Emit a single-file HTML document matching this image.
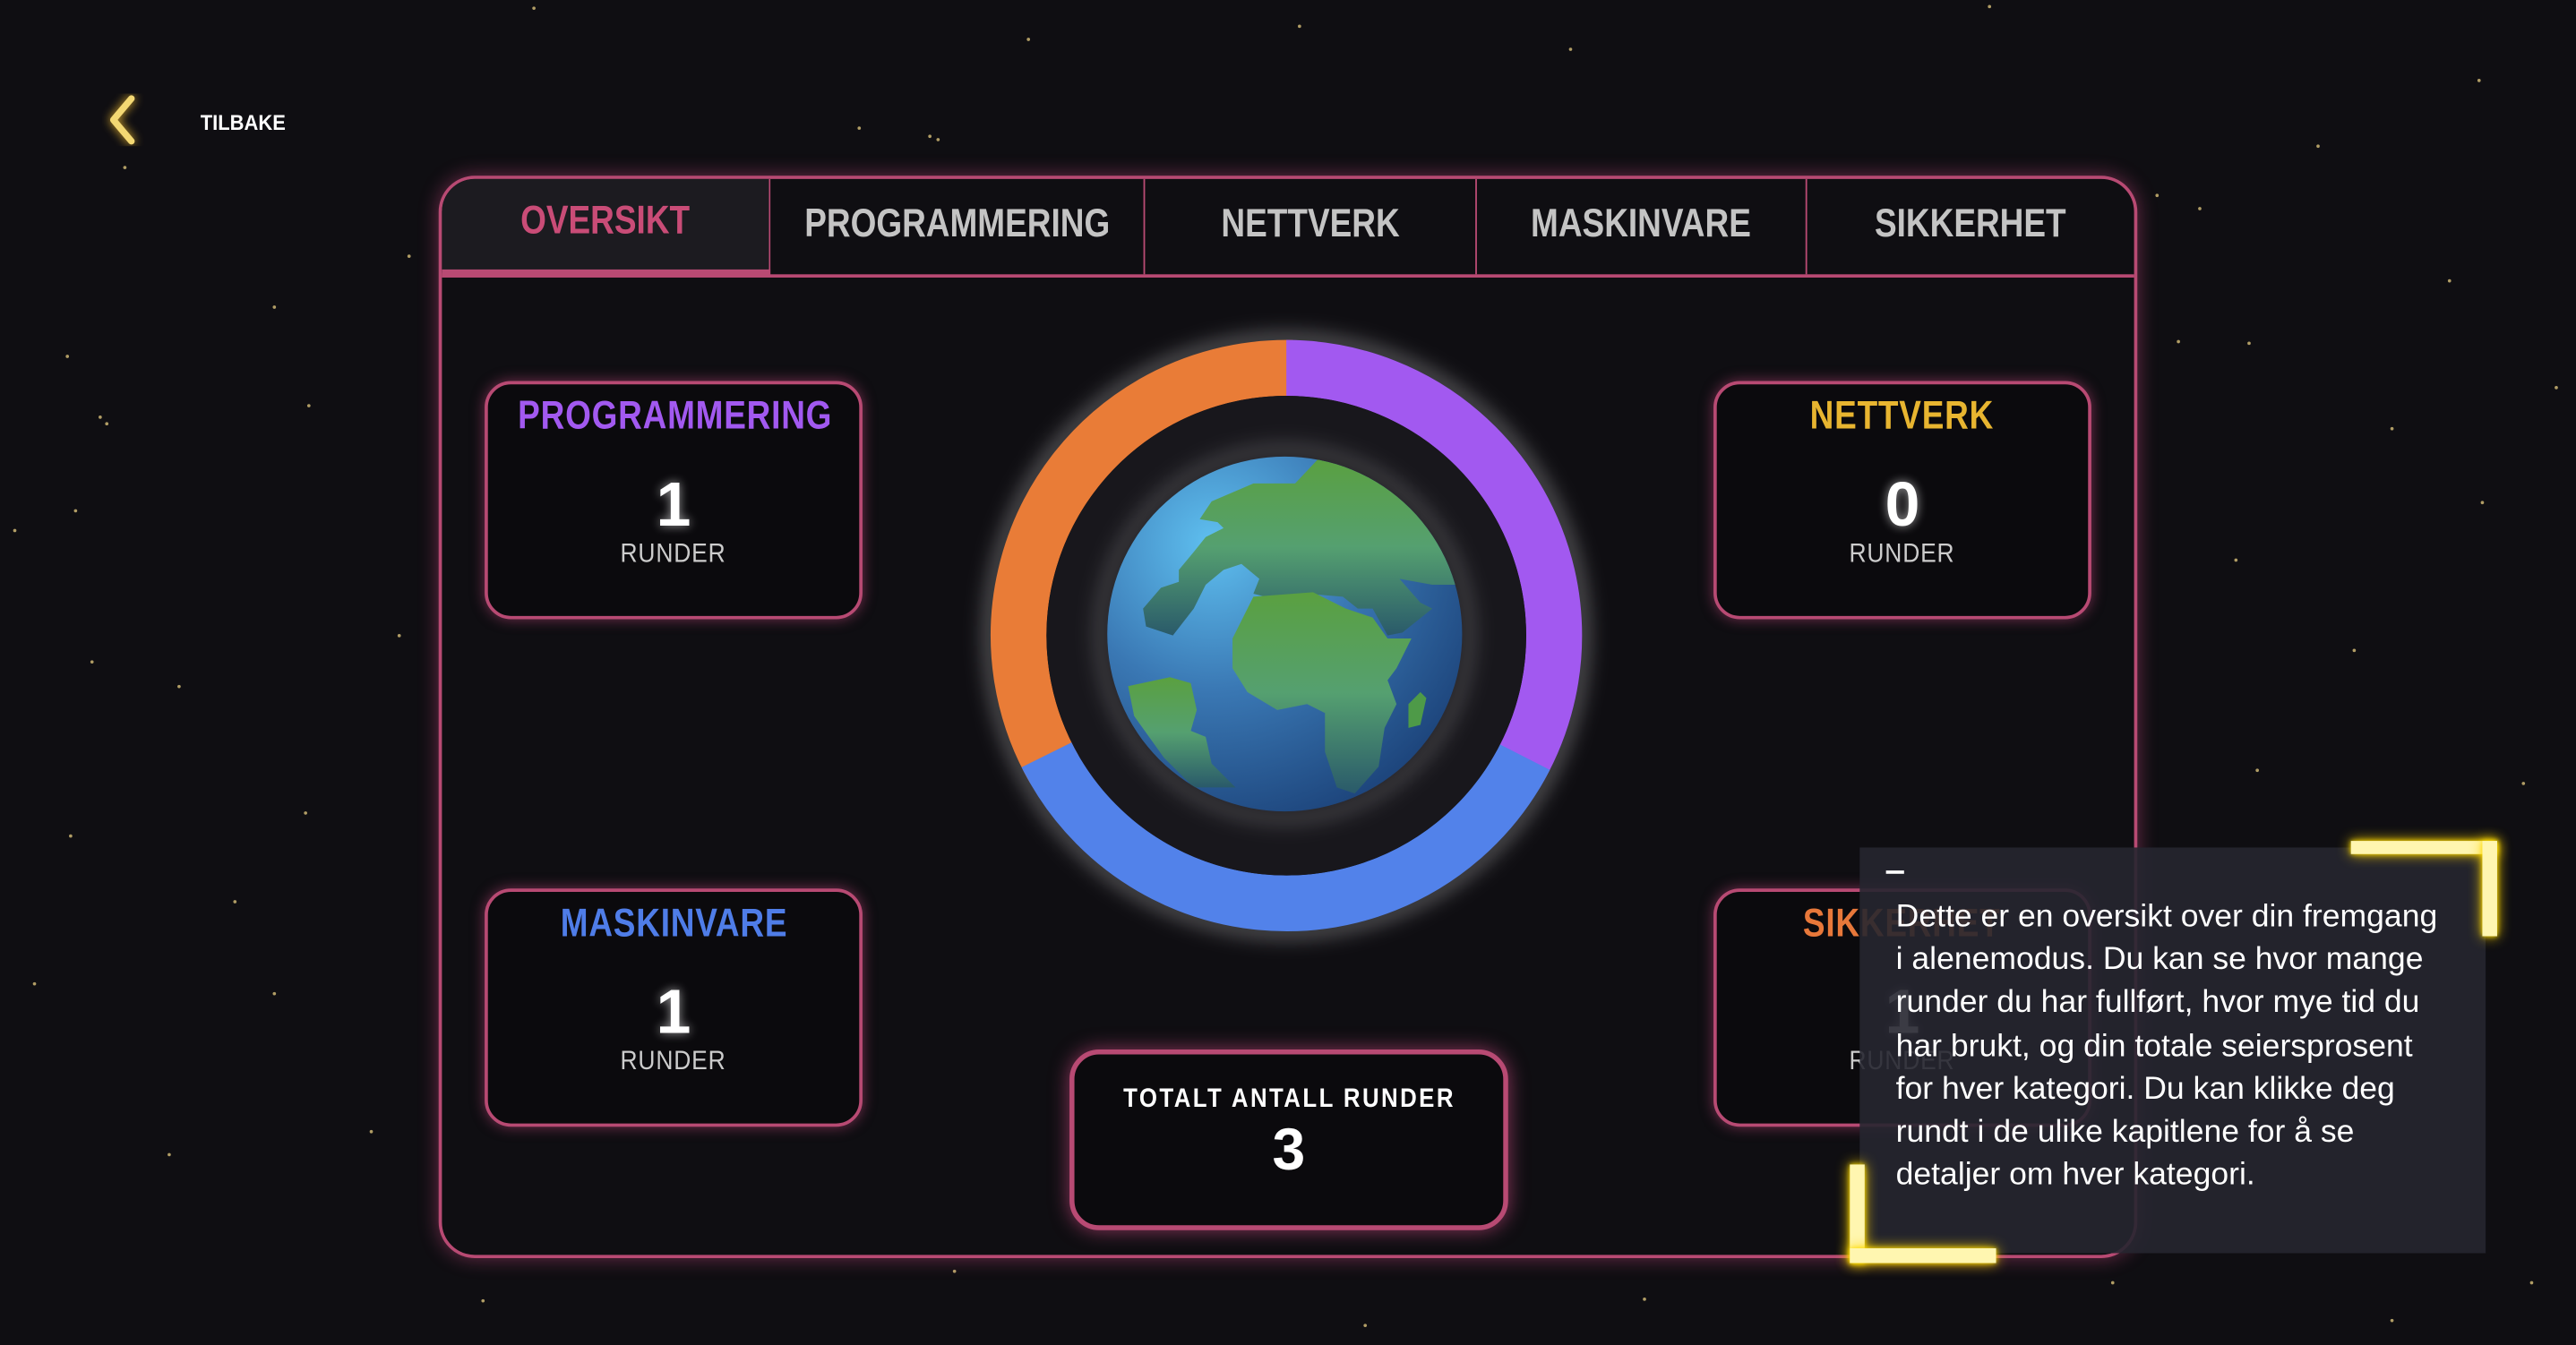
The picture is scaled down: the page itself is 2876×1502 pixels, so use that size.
<!DOCTYPE html>
<html><head><meta charset="utf-8"><style>
html,body{margin:0;padding:0;background:#0e0d11;overflow:hidden}
#s{position:absolute;left:0;top:0;width:1568px;height:819px;transform:scale(1.83418);transform-origin:0 0;background:#0f0e12;font-family:"Liberation Sans",sans-serif;overflow:hidden}
.a{position:absolute}
.n{font-weight:bold}
.c{display:inline-block;transform:scaleX(.84);white-space:nowrap}
.st{position:absolute;width:2px;height:2px;border-radius:50%;background:#d9c27a;opacity:.8}
.panel{left:267px;top:107px;width:1030px;height:655px;border:2px solid #b84a73;border-radius:22px;box-shadow:0 0 12px rgba(220,80,140,.45);background:#0f0e12}
.tab{position:absolute;top:0;height:58px;line-height:56px;text-align:center;color:#c4c4c4;font-size:24px;border-right:1px solid #b84a73}
.card{position:absolute;width:226px;height:141px;border:2px solid #b84a73;border-radius:16px;background:#0b0a0d;box-shadow:0 0 8px rgba(220,80,140,.5);text-align:center}
.card .t{margin-top:6px;font-size:24px;letter-spacing:.5px}
.card .v{margin-top:20px;font-size:38px;line-height:40px;color:#fff;font-weight:bold;text-shadow:0 0 6px rgba(255,255,255,.6)}
.card .r{font-size:16px;color:#ccc;margin-top:1px;letter-spacing:.5px}
.y{position:absolute;background:#fff6b0;box-shadow:0 0 8px #ffd400,0 0 3px #ffe600;}
.tt div{white-space:nowrap}
</style></head><body><div id="s">
<div class="st" style="left:324px;top:4px"></div><div class="st" style="left:625px;top:23px"></div><div class="st" style="left:790px;top:15px"></div><div class="st" style="left:955px;top:29px"></div><div class="st" style="left:1210px;top:3px"></div><div class="st" style="left:1508px;top:48px"></div><div class="st" style="left:1410px;top:88px"></div><div class="st" style="left:1312px;top:118px"></div><div class="st" style="left:1338px;top:126px"></div><div class="st" style="left:522px;top:77px"></div><div class="st" style="left:565px;top:82px"></div><div class="st" style="left:570px;top:84px"></div><div class="st" style="left:75px;top:101px"></div><div class="st" style="left:248px;top:155px"></div><div class="st" style="left:166px;top:186px"></div><div class="st" style="left:40px;top:216px"></div><div class="st" style="left:187px;top:246px"></div><div class="st" style="left:60px;top:253px"></div><div class="st" style="left:64px;top:257px"></div><div class="st" style="left:45px;top:310px"></div><div class="st" style="left:8px;top:322px"></div><div class="st" style="left:242px;top:386px"></div><div class="st" style="left:108px;top:417px"></div><div class="st" style="left:55px;top:402px"></div><div class="st" style="left:185px;top:494px"></div><div class="st" style="left:42px;top:508px"></div><div class="st" style="left:142px;top:548px"></div><div class="st" style="left:166px;top:604px"></div><div class="st" style="left:20px;top:598px"></div><div class="st" style="left:225px;top:688px"></div><div class="st" style="left:102px;top:702px"></div><div class="st" style="left:293px;top:791px"></div><div class="st" style="left:580px;top:773px"></div><div class="st" style="left:830px;top:806px"></div><div class="st" style="left:1000px;top:790px"></div><div class="st" style="left:1285px;top:780px"></div><div class="st" style="left:1455px;top:803px"></div><div class="st" style="left:1540px;top:780px"></div><div class="st" style="left:1368px;top:208px"></div><div class="st" style="left:1325px;top:207px"></div><div class="st" style="left:1455px;top:260px"></div><div class="st" style="left:1510px;top:305px"></div><div class="st" style="left:1360px;top:340px"></div><div class="st" style="left:1432px;top:395px"></div><div class="st" style="left:1373px;top:468px"></div><div class="st" style="left:1535px;top:476px"></div><div class="st" style="left:1555px;top:235px"></div><div class="st" style="left:1490px;top:170px"></div>

<svg class="a" style="left:62px;top:57px" width="26" height="32" viewBox="0 0 26 32"><path d="M18 3 L7 16 L18 29" fill="none" stroke="#f3d873" stroke-width="4" stroke-linecap="round" stroke-linejoin="round" style="filter:drop-shadow(0 0 3px #e8b530)"/></svg>
<div class="a" style="left:122px;top:67px;color:#fff;font-size:13px;font-weight:bold"><span class="c" style="transform-origin:0 0;transform:scaleX(.92)">TILBAKE</span></div>

<div class="a panel">
 <div class="tab n" style="left:0;width:199px;background:#1c1b20;color:#c94c77;border-top-left-radius:20px;height:55px;border-bottom:4px solid #b84a73;line-height:52px"><span class="c">OVERSIKT</span></div>
 <div class="tab n" style="left:200px;width:227px"><span class="c">PROGRAMMERING</span></div>
 <div class="tab n" style="left:428px;width:201px"><span class="c">NETTVERK</span></div>
 <div class="tab n" style="left:630px;width:200px"><span class="c">MASKINVARE</span></div>
 <div class="tab n" style="left:831px;width:199px;border-right:none"><span class="c">SIKKERHET</span></div>
 <div class="a" style="left:0;top:58px;width:1030px;height:2px;background:#b84a73"></div>

 <div class="card" style="left:26px;top:123px"><div class="t n" style="color:#a259f0"><span class="c">PROGRAMMERING</span></div><div class="v n">1</div><div class="r"><span class="c" style="transform:scaleX(.9)">RUNDER</span></div></div>
 <div class="card" style="left:26px;top:432px"><div class="t n" style="color:#4f7de8"><span class="c">MASKINVARE</span></div><div class="v n">1</div><div class="r"><span class="c" style="transform:scaleX(.9)">RUNDER</span></div></div>
 <div class="card" style="left:774px;top:123px"><div class="t n" style="color:#e8b530"><span class="c">NETTVERK</span></div><div class="v n">0</div><div class="r"><span class="c" style="transform:scaleX(.9)">RUNDER</span></div></div>
 <div class="card" style="left:774px;top:432px"><div class="t n" style="color:#e8783a"><span class="c">SIKKERHET</span></div><div class="v n">1</div><div class="r"><span class="c" style="transform:scaleX(.9)">RUNDER</span></div></div>

 <div class="card" style="left:382px;top:530px;width:261px;height:104px;border-width:3px;border-radius:18px;box-shadow:0 0 12px rgba(220,80,140,.6)">
  <div class="n" style="color:#fff;font-size:16px;letter-spacing:1.5px;margin-top:19px"><span class="c" style="transform:scaleX(.88)">TOTALT ANTALL RUNDER</span></div>
  <div class="n" style="color:#fff;font-size:36px;margin-top:0px">3</div></div>
</div>

<svg class="a" style="left:583px;top:187px" width="400" height="400" viewBox="0 0 400 400">
 <defs><filter id="gl"><feGaussianBlur stdDeviation="6"/></filter>
 <clipPath id="gc"><circle cx="199" cy="199" r="108"/></clipPath>
 <radialGradient id="oc" cx="0.3" cy="0.25" r="0.9"><stop offset="0" stop-color="#5fc0f0"/><stop offset="0.45" stop-color="#3a78b4"/><stop offset="1" stop-color="#173a70"/></radialGradient>
 <linearGradient id="ld" x1="0" y1="0" x2="0" y2="1"><stop offset="0" stop-color="#5aa040"/><stop offset="0.5" stop-color="#55a070"/><stop offset="1" stop-color="#2a5a6a"/></linearGradient></defs>
 <circle cx="200" cy="200" r="180" fill="none" stroke="rgba(255,255,255,.35)" stroke-width="8" filter="url(#gl)"/>
 <circle cx="200" cy="200" r="163" fill="none" stroke="#e97c37" stroke-width="34" stroke-dasharray="345 1100" transform="rotate(150 200 200)"/>
 <circle cx="200" cy="200" r="163" fill="none" stroke="#a259f0" stroke-width="34" stroke-dasharray="345 1100" transform="rotate(-90 200 200)"/>
 <circle cx="200" cy="200" r="163" fill="none" stroke="#5282ea" stroke-width="34" stroke-dasharray="360 1100" transform="rotate(27 200 200)"/>
 <circle cx="200" cy="200" r="146" fill="#18171c"/>
 <circle cx="199" cy="199" r="112" fill="none" stroke="rgba(255,255,255,.25)" stroke-width="6" filter="url(#gl)"/>
 <g clip-path="url(#gc)"><g transform="translate(91,91) scale(0.1815) translate(-110,-90)">
  <rect x="100" y="80" width="1210" height="1210" fill="url(#oc)"/>
  <path fill="url(#ld)" d="M420 300 L460 240 L600 180 L740 180 L820 95 L1320 95 L1320 520 L1200 520 L1090 500 L1160 580 L1200 600 L1100 680 L1050 690 L1000 600 L950 600 L900 560 L780 550 L640 560 L600 550 L620 500 L560 450 L500 470 L440 520 L400 600 L330 690 L240 660 L230 600 L290 530 L350 510 L350 470 L400 410 L440 360 L500 330 L480 310 Z"/>
  <path fill="url(#ld)" d="M600 560 L800 545 L910 600 L1000 630 L1050 700 L1130 700 L1080 800 L1050 840 L1080 920 L1040 1000 L1020 1130 L940 1220 L880 1200 L840 1080 L840 950 L780 920 L680 940 L580 880 L530 800 L530 700 Z"/>
  <path fill="url(#ld)" d="M180 860 L320 830 L390 850 L410 940 L390 1010 L440 1030 L460 1120 L540 1200 L400 1200 L300 1100 L200 960 Z"/>
  <path fill="#4e9a48" d="M1160 880 L1180 900 L1160 990 L1120 1000 L1120 920 Z"/>
 </g></g>
</svg>

<div class="a" style="left:1132px;top:516px;width:381px;height:247px;background:rgba(38,38,48,.9)"></div>
<div class="a" style="left:1148px;top:530px;width:11px;height:2px;background:#fff"></div>
<div class="a tt" style="left:1154px;top:546px;color:#fff;font-size:19px;line-height:26.2px;transform:scaleX(1.02);transform-origin:0 0">
<div>Dette er en oversikt over din fremgang</div>
<div>i alenemodus. Du kan se hvor mange</div>
<div>runder du har fullført, hvor mye tid du</div>
<div>har brukt, og din totale seiersprosent</div>
<div>for hver kategori. Du kan klikke deg</div>
<div>rundt i de ulike kapitlene for å se</div>
<div>detaljer om hver kategori.</div>
</div>

<div class="y" style="left:1431px;top:512px;width:89px;height:8px"></div>
<div class="y" style="left:1511px;top:512px;width:9px;height:58px"></div>
<div class="y" style="left:1126px;top:709px;width:9px;height:60px"></div>
<div class="y" style="left:1126px;top:760px;width:89px;height:9px"></div>
</div></body></html>
